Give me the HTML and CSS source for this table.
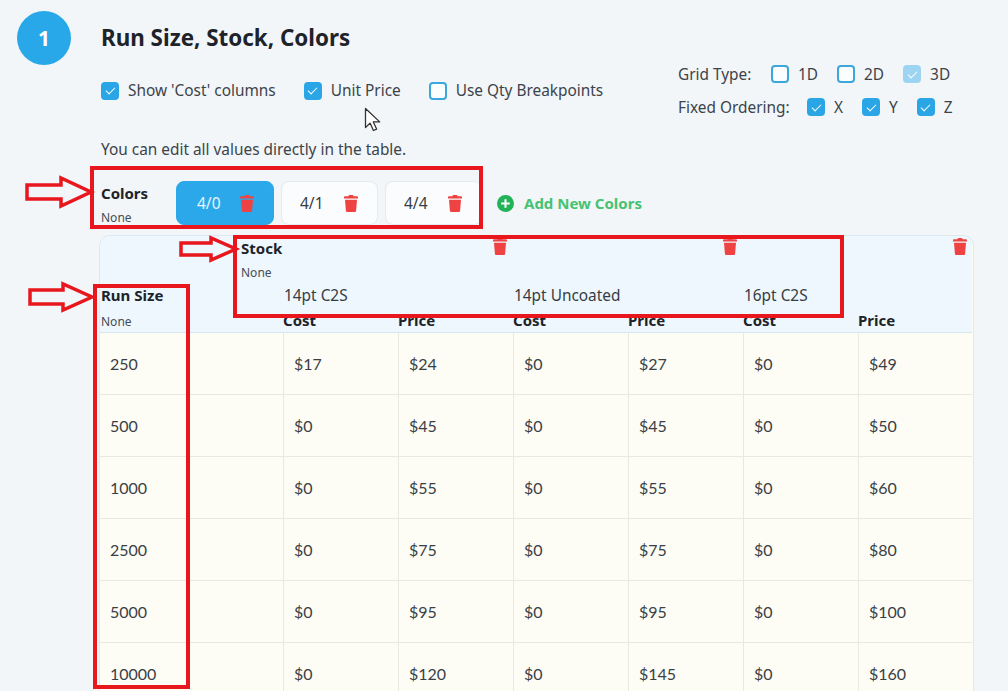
FILE: index.html
```html
<!DOCTYPE html>
<html>
<head>
<meta charset="utf-8">
<link rel="stylesheet" href="styles.css">
</head>
<body>
<div class="page">
  <div class="step">1</div>
  <div class="main">
    <h1 class="title">Run Size, Stock, Colors</h1>
    <div class="options">
      <div class="opts-left">
        <label class="cb"><span class="box on"></span>Show 'Cost' columns</label>
        <label class="cb"><span class="box on"></span>Unit Price</label>
        <label class="cb"><span class="box"></span>Use Qty Breakpoints</label>
      </div>
      <div class="opts-right">
        <div class="opt-row">
          <span class="opt-label grid-label">Grid Type:</span>
          <label class="cb"><span class="box"></span>1D</label>
          <label class="cb"><span class="box"></span>2D</label>
          <label class="cb"><span class="box on dim"></span>3D</label>
        </div>
        <div class="opt-row">
          <span class="opt-label fixed-label">Fixed Ordering:</span>
          <label class="cb"><span class="box on"></span>X</label>
          <label class="cb"><span class="box on"></span>Y</label>
          <label class="cb"><span class="box on"></span>Z</label>
        </div>
      </div>
    </div>
    <p class="desc">You can edit all values directly in the table.</p>
    <div class="colors">
      <div class="dim-label">
        <div class="dim-name">Colors</div>
        <div class="dim-none">None</div>
      </div>
      <div class="tab active">4/0<svg class="trash" viewBox="0 0 14 17"><path d="M5 0h4l.6 1.3H13a1 1 0 0 1 1 1V3.6H0V2.3a1 1 0 0 1 1-1h3.4z M1 4.8h12l-.9 11a1.3 1.3 0 0 1-1.3 1.2H3.2a1.3 1.3 0 0 1-1.3-1.2z"/></svg></div>
      <div class="tab">4/1<svg class="trash" viewBox="0 0 14 17"><path d="M5 0h4l.6 1.3H13a1 1 0 0 1 1 1V3.6H0V2.3a1 1 0 0 1 1-1h3.4z M1 4.8h12l-.9 11a1.3 1.3 0 0 1-1.3 1.2H3.2a1.3 1.3 0 0 1-1.3-1.2z"/></svg></div>
      <div class="tab">4/4<svg class="trash" viewBox="0 0 14 17"><path d="M5 0h4l.6 1.3H13a1 1 0 0 1 1 1V3.6H0V2.3a1 1 0 0 1 1-1h3.4z M1 4.8h12l-.9 11a1.3 1.3 0 0 1-1.3 1.2H3.2a1.3 1.3 0 0 1-1.3-1.2z"/></svg></div>
      <div class="add"><svg class="plus" viewBox="0 0 18 18"><circle cx="9" cy="9" r="9"/><path d="M9 4.5v9M4.5 9h9"/></svg>Add New Colors</div>
    </div>

    <div class="grid">
      <div class="h-stock"><div class="dim-name">Stock</div><div class="dim-none">None</div></div>
      <div class="h-trash g1"><svg class="trash" viewBox="0 0 14 17"><path d="M5 0h4l.6 1.3H13a1 1 0 0 1 1 1V3.6H0V2.3a1 1 0 0 1 1-1h3.4z M1 4.8h12l-.9 11a1.3 1.3 0 0 1-1.3 1.2H3.2a1.3 1.3 0 0 1-1.3-1.2z"/></svg></div>
      <div class="h-trash g2"><svg class="trash" viewBox="0 0 14 17"><path d="M5 0h4l.6 1.3H13a1 1 0 0 1 1 1V3.6H0V2.3a1 1 0 0 1 1-1h3.4z M1 4.8h12l-.9 11a1.3 1.3 0 0 1-1.3 1.2H3.2a1.3 1.3 0 0 1-1.3-1.2z"/></svg></div>
      <div class="h-trash g3"><svg class="trash" viewBox="0 0 14 17"><path d="M5 0h4l.6 1.3H13a1 1 0 0 1 1 1V3.6H0V2.3a1 1 0 0 1 1-1h3.4z M1 4.8h12l-.9 11a1.3 1.3 0 0 1-1.3 1.2H3.2a1.3 1.3 0 0 1-1.3-1.2z"/></svg></div>

      <div class="h-run"><div class="dim-name">Run Size</div><div class="dim-none">None</div></div>
      <div class="h-sname g1">14pt C2S</div>
      <div class="h-sname g2">14pt Uncoated</div>
      <div class="h-sname g3">16pt C2S</div>

      <div class="h-col">Cost</div><div class="h-col">Price</div>
      <div class="h-col">Cost</div><div class="h-col">Price</div>
      <div class="h-col">Cost</div><div class="h-col last">Price</div>

      <div class="c first">250</div><div class="c">$17</div><div class="c">$24</div><div class="c">$0</div><div class="c">$27</div><div class="c">$0</div><div class="c">$49</div>
      <div class="c first">500</div><div class="c">$0</div><div class="c">$45</div><div class="c">$0</div><div class="c">$45</div><div class="c">$0</div><div class="c">$50</div>
      <div class="c first">1000</div><div class="c">$0</div><div class="c">$55</div><div class="c">$0</div><div class="c">$55</div><div class="c">$0</div><div class="c">$60</div>
      <div class="c first">2500</div><div class="c">$0</div><div class="c">$75</div><div class="c">$0</div><div class="c">$75</div><div class="c">$0</div><div class="c">$80</div>
      <div class="c first">5000</div><div class="c">$0</div><div class="c">$95</div><div class="c">$0</div><div class="c">$95</div><div class="c">$0</div><div class="c">$100</div>
      <div class="c first">10000</div><div class="c">$0</div><div class="c">$120</div><div class="c">$0</div><div class="c">$145</div><div class="c">$0</div><div class="c">$160</div>
    </div>
  </div>
</div>

<div class="annot box-colors"></div>
<div class="annot box-stock"></div>
<div class="annot box-run"></div>
<svg class="arrows" viewBox="0 0 1008 691" width="1008" height="691">
  <g fill="none" stroke="#e8161d" stroke-width="3.5" stroke-linejoin="miter">
    <polygon points="27,185 61,185 61,178 91,192 61,206 61,199 27,199"/>
    <polygon points="181,243 211,243 211,238 236,249 211,260 211,255 181,255"/>
    <polygon points="30,290 63,290 63,284 92,297 63,310 63,304 30,304"/>
  </g>
</svg>
<svg class="cursor" viewBox="0 0 20 26" width="20" height="26">
  <path d="M1.5 1.5v19l4.6-4.4 3.3 7.4 3.2-1.4-3.3-7.2h6.4z" fill="#fff" stroke="#333" stroke-width="1.3" stroke-linejoin="round"/>
</svg>
</body>
</html>
```

FILE: styles.css
```css
* { box-sizing: border-box; }
body {
  margin: 0;
  background: #f2f6f8;
  font-family: "Noto Sans", "Open Sans", sans-serif;
  color: #2a2f36;
  width: 1008px;
  height: 691px;
  overflow: hidden;
  position: relative;
}
.page {
  display: flex;
  align-items: flex-start;
  padding: 11px 0 0 17px;
}
.step {
  width: 54px;
  height: 54px;
  border-radius: 50%;
  background: #29a8e9;
  color: #fff;
  font-weight: 700;
  font-size: 21px;
  display: flex;
  align-items: center;
  justify-content: center;
  flex: none;
}
.main {
  margin-left: 30px;
  flex: 1;
}
.title {
  margin: 13px 0 0;
  font-size: 22.4px;
  line-height: 28px;
  font-weight: 700;
  color: #1e232a;
}
.options {
  margin-top: 8px;
  height: 61px;
  display: flex;
  align-items: center;
}
.opts-left {
  display: flex;
  gap: 28px;
  width: 577px;
  flex: none;
}
.opts-right {
  display: flex;
  flex-direction: column;
  gap: 5px;
}
.opt-row {
  display: flex;
  align-items: center;
  height: 28px;
  gap: 19px;
}
.opt-label { color: #3c434b; font-size: 15.4px; flex: none; white-space: nowrap; }
.grid-label { width: 74px; }
.fixed-label { width: 110px; }
.cb {
  display: flex;
  align-items: center;
  gap: 9px;
  font-size: 15.4px;
  color: #3c434b;
  white-space: nowrap;
}
.box {
  width: 18px;
  height: 18px;
  border-radius: 4px;
  border: 2px solid #3ba7dc;
  background: #fbfdfe;
  flex: none;
  position: relative;
}
.box.on {
  background: #2aa6e6;
  border-color: #2aa6e6;
}
.box.on::after {
  content: "";
  position: absolute;
  left: 4.5px;
  top: 1.5px;
  width: 4px;
  height: 8px;
  border: solid #fff;
  border-width: 0 1.5px 1.5px 0;
  transform: rotate(45deg);
}
.box.dim {
  background: #9dd4f1;
  border-color: #9dd4f1;
}
.desc {
  margin: 19px 0 0;
  font-size: 15.4px;
  line-height: 20px;
  color: #3c434b;
}
.colors {
  margin-top: 21px;
  display: flex;
  align-items: center;
  height: 44px;
}
.dim-label {
  width: 75px;
  align-self: stretch;
  padding-top: 2px;
  flex: none;
}
.dim-name {
  font-weight: 700;
  font-size: 15px;
  line-height: 20px;
  color: #1e232a;
}
.dim-none {
  font-size: 12px;
  line-height: 16px;
  margin-top: 7px;
  color: #454c54;
}
.tab {
  width: 97px;
  height: 44px;
  border-radius: 8px;
  background: #fbfcfd;
  border: 1px solid #e6eaee;
  display: flex;
  align-items: center;
  justify-content: space-between;
  padding: 0 19px 0 18px;
  font-size: 15.5px;
  color: #363c44;
  margin-right: 7px;
  flex: none;
}
.tab.active {
  background: #2aa8ea;
  border-color: #2aa8ea;
  color: #e8f6fd;
  width: 98px;
  padding-left: 20px;
}
.trash {
  width: 14px;
  height: 17px;
  fill: #ef4343;
  display: block;
}
.add {
  margin-left: 8px;
  display: flex;
  align-items: center;
  gap: 10px;
  font-weight: 700;
  font-size: 15px;
  color: #47c272;
}
.plus { width: 17px; height: 17px; }
.plus circle { fill: #22b257; }
.plus path { stroke: #fff; stroke-width: 2.2; }

.grid {
  margin: 11px 0 0 -1px;
  width: 873px;
  display: grid;
  grid-template-columns: 183px repeat(5, 115px) 114px;
  grid-template-rows: 48px 25px 24px;
  grid-auto-rows: 62px;
  background: #fdfdf5;
  border-radius: 10px 10px 0 0;
  overflow: hidden;
  box-shadow: 0 0 0 1px #dde9f1;
}
.h-stock, .h-trash, .h-run, .h-sname, .h-col { background: #edf7fd; }
.h-stock {
  grid-column: 1;
  grid-row: 1;
  padding: 2px 0 0 141px;
}
.h-stock .dim-name { font-size: 15px; }
.h-stock .dim-none { margin-top: 7px; }
.h-trash {
  grid-row: 1;
  display: flex;
  justify-content: flex-end;
  padding: 2px 6px 0 0;
}
.h-trash.g1 { grid-column: 2 / 4; }
.h-trash.g2 { grid-column: 4 / 6; }
.h-trash.g3 { grid-column: 6 / 8; padding-right: 5px; }
.h-run {
  grid-column: 1;
  grid-row: 2 / 4;
  padding: 1px 0 0 1px;
  border-bottom: 1px solid #d8e8f2;
}
.h-run .dim-none { margin-top: 9px; }
.h-sname {
  grid-row: 2;
  font-size: 15.4px;
  line-height: 24px;
  padding-left: 1px;
  color: #363c44;
}
.h-sname.g1 { grid-column: 2 / 4; }
.h-sname.g2 { grid-column: 4 / 6; }
.h-sname.g3 { grid-column: 6 / 8; }
.h-col {
  grid-row: 3;
  font-weight: 700;
  font-size: 15px;
  line-height: 22px;
  color: #1e232a;
  border-bottom: 1px solid #d8e8f2;
}
.c {
  font-family: "Lato", "Noto Sans", sans-serif;
  font-size: 16px;
  color: #3a3f45;
  display: flex;
  align-items: center;
  padding-left: 10px;
  border-bottom: 1px solid #e9e9e2;
  border-left: 1px solid #e9e9e2;
}
.c.first { border-left: none; }

.annot {
  position: absolute;
  border: 4px solid #e8161d;
}
.box-colors { left: 90px; top: 166px; width: 393px; height: 63px; }
.box-stock { left: 233px; top: 235px; width: 611px; height: 83px; }
.box-run { left: 93px; top: 284px; width: 97px; height: 405px; }
.arrows {
  position: absolute;
  left: 0;
  top: 0;
  pointer-events: none;
}
.cursor {
  position: absolute;
  left: 364px;
  top: 107px;
}
```
